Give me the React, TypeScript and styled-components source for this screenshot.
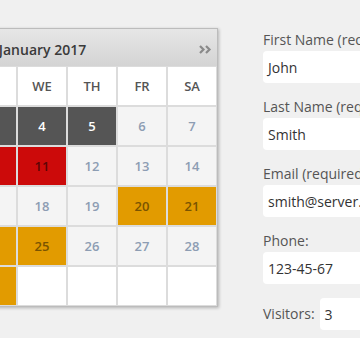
import React from 'react';
import styled, { createGlobalStyle } from 'styled-components';

const GlobalStyle = createGlobalStyle`
  html, body {
    margin: 0;
    padding: 0;
    background: #ffffff;
  }
  body {
    font-family: 'Open Sans', 'Noto Sans', sans-serif;
  }
`;

type Tone = 'normal' | 'dark' | 'red' | 'orange' | 'empty' | 'head';

const tones: Record<Tone, { bg: string; fg: string }> = {
  normal: { bg: '#f4f4f4', fg: '#8d9db3' },
  dark: { bg: '#555555', fg: '#ffffff' },
  red: { bg: '#cc0a0a', fg: '#5c0505' },
  orange: { bg: '#e29b00', fg: '#7a5400' },
  empty: { bg: '#ffffff', fg: '#8d9db3' },
  head: { bg: '#ffffff', fg: '#555555' },
};

const Page = styled.div`
  height: 338px;
  background: #f0f0f0;
  display: flex;
  align-items: flex-start;
  overflow: hidden;
`;

const Calendar = styled.div`
  flex: none;
  margin: 28px 0 0 -134px;
  width: 350px;
  border: 1px solid #bcbcbc;
  box-shadow: 1px 1px 3px rgba(0, 0, 0, 0.25);
  background: #ffffff;
`;

const Header = styled.div`
  height: 37px;
  padding: 3px 5px 0 6px;
  box-sizing: border-box;
  display: flex;
  align-items: center;
  justify-content: space-between;
  background: linear-gradient(#e6e6e6, #d4d4d4);
`;

const Title = styled.div`
  font-size: 14px;
  font-weight: 600;
  color: #3a3a3a;
`;

const NavArrow = styled.svg`
  width: 14px;
  height: 9px;
  display: block;
`;

const Grid = styled.div`
  display: grid;
  grid-template-columns: repeat(7, 1fr);
  grid-auto-rows: 38px;
  gap: 2px;
  padding: 1px;
  background: #dcdcdc;
`;

const Cell = styled.div<{ $tone: Tone }>`
  display: flex;
  align-items: center;
  justify-content: center;
  font-size: 13px;
  font-weight: 600;
  background: ${(p) => tones[p.$tone].bg};
  color: ${(p) => tones[p.$tone].fg};
`;

const Form = styled.div`
  flex: none;
  margin-left: 45px;
  padding-top: 30px;
  display: flex;
  flex-direction: column;
  gap: 14px;
`;

const Field = styled.div`
  display: flex;
  flex-direction: column;
  gap: 1px;
`;

const InlineField = styled.div`
  display: flex;
  align-items: center;
  gap: 5px;
`;

const Label = styled.label`
  font-size: 14px;
  line-height: 20px;
  color: #555555;
  white-space: nowrap;
`;

const Input = styled.div<{ $width: number }>`
  width: ${(p) => p.$width}px;
  height: 32px;
  box-sizing: border-box;
  padding: 0 5px;
  display: flex;
  align-items: center;
  background: #ffffff;
  border-radius: 4px;
  font-size: 14px;
  color: #333333;
  white-space: nowrap;
`;

const dayNames = ['SU', 'MO', 'TU', 'WE', 'TH', 'FR', 'SA'];

const special: Record<number, Tone> = {
  1: 'dark', 2: 'dark', 3: 'dark', 4: 'dark', 5: 'dark',
  8: 'red', 9: 'red', 10: 'red', 11: 'red',
  20: 'orange', 21: 'orange', 22: 'orange', 23: 'orange', 24: 'orange', 25: 'orange',
  29: 'orange', 30: 'orange', 31: 'orange',
};

const days = Array.from({ length: 35 }, (_, i) => (i < 31 ? i + 1 : 0));

export default function App() {
  return (
    <>
      <GlobalStyle />
      <Page>
        <Calendar>
          <Header>
            <NavArrow viewBox="0 0 14 9">
              <path d="M6 1L2.5 4.5L6 8M12 1L8.5 4.5L12 8" fill="none" stroke="#8a8a8a" strokeWidth="2.2" />
            </NavArrow>
            <Title>January 2017</Title>
            <NavArrow viewBox="0 0 14 9">
              <path d="M2 1L5.5 4.5L2 8M8 1L11.5 4.5L8 8" fill="none" stroke="#8a8a8a" strokeWidth="2.2" />
            </NavArrow>
          </Header>
          <Grid>
            {dayNames.map((d) => (
              <Cell key={d} $tone="head">{d}</Cell>
            ))}
            {days.map((d, i) =>
              d ? (
                <Cell key={i} $tone={special[d] ?? 'normal'}>{d}</Cell>
              ) : (
                <Cell key={i} $tone="empty" />
              )
            )}
          </Grid>
        </Calendar>
        <Form>
          <Field>
            <Label>First Name (required):</Label>
            <Input $width={180}>John</Input>
          </Field>
          <Field>
            <Label>Last Name (required):</Label>
            <Input $width={180}>Smith</Input>
          </Field>
          <Field>
            <Label>Email (required):</Label>
            <Input $width={180}>smith@server.com</Input>
          </Field>
          <Field>
            <Label>Phone:</Label>
            <Input $width={180}>123-45-67</Input>
          </Field>
          <InlineField>
            <Label>Visitors:</Label>
            <Input $width={80}>3</Input>
          </InlineField>
        </Form>
      </Page>
    </>
  );
}
